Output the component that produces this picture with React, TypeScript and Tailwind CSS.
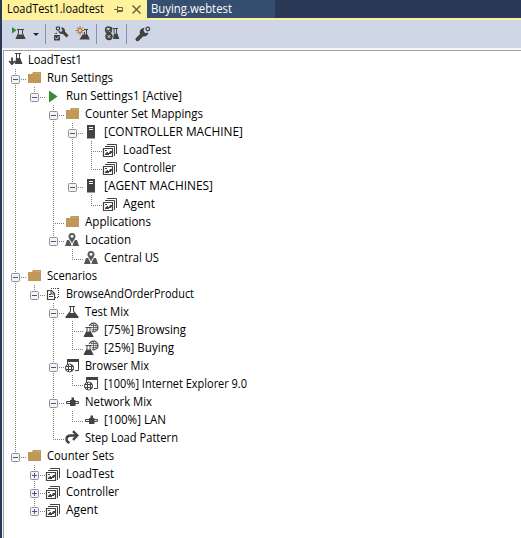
import type { ReactNode } from "react";

type IconName =
  | "root" | "folder" | "play" | "server" | "counter" | "location" | "scenario"
  | "flask" | "webtest" | "browser" | "network" | "step";

interface TreeNode {
  label: string;
  icon: IconName;
  width: number;
  collapsed?: boolean;
  children?: TreeNode[];
}

const tree: TreeNode[] = [
  {
    label: "Run Settings", icon: "folder", width: 66,
    children: [
      {
        label: "Run Settings1 [Active]", icon: "play", width: 116,
        children: [
          {
            label: "Counter Set Mappings", icon: "folder", width: 118,
            children: [
              {
                label: "[CONTROLLER MACHINE]", icon: "server", width: 139,
                children: [
                  { label: "LoadTest", icon: "counter", width: 48 },
                  { label: "Controller", icon: "counter", width: 53 },
                ],
              },
              {
                label: "[AGENT MACHINES]", icon: "server", width: 109,
                children: [{ label: "Agent", icon: "counter", width: 32 }],
              },
            ],
          },
          { label: "Applications", icon: "folder", width: 66 },
          {
            label: "Location", icon: "location", width: 46,
            children: [{ label: "Central US", icon: "location", width: 55 }],
          },
        ],
      },
    ],
  },
  {
    label: "Scenarios", icon: "folder", width: 50,
    children: [
      {
        label: "BrowseAndOrderProduct", icon: "scenario", width: 128,
        children: [
          {
            label: "Test Mix", icon: "flask", width: 44,
            children: [
              { label: "[75%] Browsing", icon: "webtest", width: 82 },
              { label: "[25%] Buying", icon: "webtest", width: 70 },
            ],
          },
          {
            label: "Browser Mix", icon: "browser", width: 64,
            children: [{ label: "[100%] Internet Explorer 9.0", icon: "browser", width: 143 }],
          },
          {
            label: "Network Mix", icon: "network", width: 67,
            children: [{ label: "[100%] LAN", icon: "network", width: 62 }],
          },
          { label: "Step Load Pattern", icon: "step", width: 93 },
        ],
      },
    ],
  },
  {
    label: "Counter Sets", icon: "folder", width: 67,
    children: [
      { label: "LoadTest", icon: "counter", width: 48, collapsed: true },
      { label: "Controller", icon: "counter", width: 53, collapsed: true },
      { label: "Agent", icon: "counter", width: 32, collapsed: true },
    ],
  },
];

function Label({ text, width }: { text: string; width: number }) {
  return (
    <svg className="block h-[18px] shrink-0 overflow-visible" width={width} height="18">
      <text x="0" y="13" textLength={width} lengthAdjust="spacingAndGlyphs" fill="currentColor">{text}</text>
    </svg>
  );
}

const glyphs: Record<IconName, ReactNode> = {
  root: (
    <>
      <path d="M8 1.5h6M9.5 2v4M12.5 2v4l2 5.5" fill="none" stroke="#424242" />
      <path d="M9 6h4l2.5 6H8V9.5h.5z" fill="#424242" />
      <path d="M5 5.5v6" stroke="#424242" strokeWidth="1.8" />
      <path d="M2.2 9L5 12.2 7.8 9" fill="none" stroke="#424242" strokeWidth="1.8" />
    </>
  ),
  folder: (
    <>
      <path d="M2 4h4l1-2h8v11H2z" fill="#c09858" />
      <path d="M8 3.5h6" stroke="#cba970" />
    </>
  ),
  play: <path d="M4 2.500l8.500 6L4 14.500z" fill="#388a34" />,
  server: (
    <>
      <path d="M4 1h8v13.500H4z" fill="#424242" />
      <path d="M6 3.5h4M6 5.5h4" stroke="#fff" />
    </>
  ),
  counter: (
    <>
      <path d="M5 2.5h9.5V12M3 4.5h9.5V14" fill="none" stroke="#424242" />
      <path d="M1.5 6.5h9v8h-9z" fill="#fff" stroke="#424242" strokeWidth="1.2" />
      <path d="M3 8h2v1H3zM3 12l2-2h1v1h1l1-2h2v2H9v1H7v1H3z" fill="#424242" />
    </>
  ),
  location: (
    <>
      <path d="M3 8h10l2 6H1z" fill="#555" />
      <path d="M4.800 4.400a3.200 3.200 0 0 1 6.400 0c0 2.400-2 3.400-3.200 7.400C6.800 7.800 4.800 6.800 4.800 4.400z" fill="#555" stroke="#fff" strokeWidth="2" />
      <path d="M4.800 4.400a3.200 3.200 0 0 1 6.400 0c0 2.400-2 3.400-3.200 6.400C6.800 7.800 4.800 6.800 4.800 4.400z" fill="#555" stroke="#555" strokeWidth=".6" />
      <circle cx="8" cy="4.200" r="1.500" fill="#fff" />
    </>
  ),
  scenario: (
    <>
      <path d="M6 2.5h8M13.500 2v9M10 11.5h3" fill="none" stroke="#424242" strokeDasharray="1 1" />
      <path d="M2.500 4.500h4l3 3v6h-7z" fill="#fff" stroke="#424242" strokeWidth="1.200" />
      <path d="M6 4.500v3.500h4L6.500 4.500M4 8.500h2M4 10.500h4" fill="none" stroke="#424242" />
    </>
  ),
  flask: (
    <>
      <path d="M5 2.500h6" stroke="#424242" />
      <path d="M6 3h4v4l4.500 5.800V14h-13v-1.200L6 7z" fill="#424242" />
      <path d="M7 3h2v4.300l1 1.700H6l1-1.700z" fill="#fff" />
    </>
  ),
  webtest: (
    <>
      <circle cx="10.500" cy="5.500" r="4.500" fill="#fff" stroke="#424242" strokeWidth="1.200" />
      <path d="M7 5.500h8M8 3.500h6M9 7.500h6M10.500 1v9M9.500 1.500c-2 3-2 5 0 8M11.500 1.500c2 3 2 5 0 8" fill="none" stroke="#424242" strokeWidth=".7" />
      <path d="M2 4h6.500v5l3.500 6H0L3 9z" fill="#fff" />
      <path d="M2.500 5.500h6M4 6v3L1.500 14h8L7 9V6" fill="none" stroke="#424242" />
      <path d="M3.500 9.500h4L10.700 15H.5z" fill="#424242" />
    </>
  ),
  browser: (
    <>
      <path d="M3.500 6V1.500h11v11H11" fill="none" stroke="#424242" />
      <path d="M3 1h12v3H3z" fill="#424242" />
      <circle cx="5.500" cy="10" r="4" fill="#fff" stroke="#424242" />
      <path d="M1.500 8.500h8M1.500 11.500h8M4.500 6v8M7.500 7v6" stroke="#424242" />
    </>
  ),
  network: (
    <>
      <path d="M2.500 7.500h12v2h-12z" fill="#eee" stroke="#424242" />
      <path d="M7.500 3.500H10V6h1.500v6H6V6h1.500z" fill="#424242" />
    </>
  ),
  step: (
    <>
      <path d="M13 5.500H7C1.500 5.500 1 11 5.500 13" fill="none" stroke="#424242" strokeWidth="2.400" />
      <path d="M9 1.200l4.300 4.300L9 9.800" fill="none" stroke="#424242" strokeWidth="2.400" />
    </>
  ),
};

function Icon({ name }: { name: IconName }) {
  return <svg className="mr-[5px] size-4 shrink-0" viewBox="0 0 16 16">{glyphs[name]}</svg>;
}

const vertical = "bg-[repeating-linear-gradient(to_bottom,#808080_0_1px,transparent_1px_2px)]";
const horizontal = "bg-[repeating-linear-gradient(to_right,#808080_0_1px,transparent_1px_2px)]";

function Guide({ active }: { active: boolean }) {
  return (
    <div className="flex h-[18px] w-[19px] shrink-0 justify-center">
      {active && <div className={`w-px ${vertical}`} />}
    </div>
  );
}

function Branch({ last, box }: { last: boolean; box?: "plus" | "minus" }) {
  return (
    <div className="relative h-[18px] w-[20px] shrink-0">
      <div className={`absolute left-[9px] top-0 w-px ${last ? "h-[11px]" : "h-[18px]"} ${vertical}`} />
      <div className={`absolute left-[9px] top-[10px] h-px w-[11px] ${horizontal}`} />
      {box && (
        <svg className="absolute left-[5px] top-[6px] size-[9px]" viewBox="0 0 9 9">
          <rect x=".5" y=".5" width="8" height="8" rx="1" fill="#f4f4f4" stroke="#919191" />
          <path d={box === "plus" ? "M2 4.5h5M4.5 2v5" : "M2 4.5h5"} stroke="#3a57a0" />
        </svg>
      )}
    </div>
  );
}

function Nodes({ nodes, guides = [] }: { nodes: TreeNode[]; guides?: boolean[] }) {
  return (
    <>
      {nodes.map((node, i) => {
        const last = i === nodes.length - 1;
        return (
          <div key={node.label}>
            <div className="flex h-[18px] items-center">
              {guides.map((g, k) => <Guide key={k} active={g} />)}
              <Branch last={last} box={node.children ? "minus" : node.collapsed ? "plus" : undefined} />
              <Icon name={node.icon} />
              <Label text={node.label} width={node.width} />
            </div>
            {node.children && <Nodes nodes={node.children} guides={[...guides, !last]} />}
          </div>
        );
      })}
    </>
  );
}

function Separator() {
  return <div className="h-5 w-px bg-[#8591a8]" />;
}

function Toolbar() {
  return (
    <div className="flex h-7 items-center bg-[#cfd6e5]">
      <svg className="ml-[9px] size-4" viewBox="0 0 16 16">
        <path d="M1 1l4.500 3.200L1 7.500z" fill="#388a34" />
        <path d="M6 3.500h7M7.500 4v3L5.500 12.500h8L11.500 7V4" fill="none" stroke="#424242" />
        <path d="M6.800 8.500h5.400l2.600 4.500H4.500z" fill="#424242" />
      </svg>
      <svg className="ml-[6px] h-[3px] w-[6px]" viewBox="0 0 6 3"><path d="M0 0h6L3 3z" fill="#1b293e" /></svg>
      <div className="ml-[6px]"><Separator /></div>
      <svg className="ml-[7px] size-4" viewBox="0 0 16 16">
        <circle cx="5" cy="2.500" r="1.700" fill="none" stroke="#424242" strokeWidth="1.200" />
        <path d="M8 1.500c2.500-.5 4.500 1.500 4 4L15.500 9.500l-2 2L10 8C7.500 8.500 5 7 5.500 4.500L8 6l1.500-1.500z" fill="#424242" />
        <path d="M1 8h3V6.500M1 9h6v5.500H1z" fill="#424242" />
        <path d="M2 11.500l1.700 1.500L6 10.500" fill="none" stroke="#cfd6e5" />
      </svg>
      <svg className="ml-[6px] size-4" viewBox="0 0 16 16">
        <path d="M5 0v9M.5 4.500h9M2 1.500l6 6M8 1.500l-6 6" stroke="#b66a18" />
        <circle cx="5" cy="4.500" r="2" fill="#cfd6e5" stroke="#b66a18" />
        <path d="M9 3.500h4M9.500 6v2L6.500 12.500h7L11.500 8V4" fill="none" stroke="#424242" />
        <path d="M7.500 8.500h5l2.300 5H4.500z" fill="#424242" />
      </svg>
      <div className="ml-[5px]"><Separator /></div>
      <svg className="ml-[7px] size-4" viewBox="0 0 16 16">
        <path d="M8.500 2.500H14M10 3v4M12.500 3v4l2 5.500" fill="none" stroke="#424242" />
        <path d="M10 7.500h3l2.300 5.500H9z" fill="#424242" />
        <circle cx="4.500" cy="4" r="2.900" fill="#cfd6e5" stroke="#424242" strokeWidth="1.500" />
        <path d="M2.500 3.800l1.700 1.700L8 1.500" fill="none" stroke="#424242" strokeWidth="1.300" />
        <circle cx="5" cy="10.500" r="3.700" fill="#424242" />
        <path d="M3.500 9l3 3M6.500 9l-3 3" stroke="#cfd6e5" />
      </svg>
      <div className="ml-[6px]"><Separator /></div>
      <svg className="ml-[8px] size-4" viewBox="0 0 16 16">
        <path d="M.5 12.500L5 8C4 5 6 2 9.500 1.800L8.500 4.500 10 7l3.500-.2C13 9.500 10.500 11 8 10.500L3.500 15c-1.500.8-3.500-.8-3-2.500z" fill="#424242" />
        <circle cx="12.800" cy="3" r="1.800" fill="#cfd6e5" stroke="#424242" strokeWidth="1.300" />
      </svg>
    </div>
  );
}

export default function App() {
  return (
    <div className="flex h-[538px] w-[521px] overflow-hidden bg-[#293955] font-['Open_Sans','Noto_Sans',sans-serif] text-[12px] text-black">
      <div className="w-[2px] shrink-0" />
      <div className="flex min-w-0 flex-1 flex-col">
        <div className="flex h-[18px] shrink-0">
          <div className="flex w-[145px] items-center bg-[#fff29d] pl-[5px]">
            <Label text="LoadTest1.loadtest" width={97} />
            <svg className="ml-[10px] h-[9px] w-[9px]" viewBox="0 0 9 9">
              <path d="M0 4.500h3M3.500 1v7M4 2.500h4.500v4H4M4 5.500h4" fill="none" stroke="#75633d" />
            </svg>
            <svg className="ml-[9px] size-[9px]" viewBox="0 0 9 9">
              <path d="M.5.5l8 8M8.500.5l-8 8" stroke="#75633d" strokeWidth="1.500" />
            </svg>
          </div>
          <div className="flex w-[128px] items-center bg-[#364e6f] pl-[4px] text-white">
            <Label text="Buying.webtest" width={81} />
          </div>
        </div>
        <div className="h-[2px] shrink-0 bg-[#fff29d]" />
        <Toolbar />
        <div className="flex min-h-0 flex-1 bg-[#f4f6fa] pl-px pt-[2px]">
          <div className="flex-1 border-l border-t border-[#a0a0a5] bg-white">
            <div className="flex h-[18px] items-center pl-[3px]">
              <Icon name="root" />
              <Label text="LoadTest1" width={54} />
            </div>
            <div className="pl-[2px]"><Nodes nodes={tree} /></div>
          </div>
        </div>
      </div>
    </div>
  );
}
